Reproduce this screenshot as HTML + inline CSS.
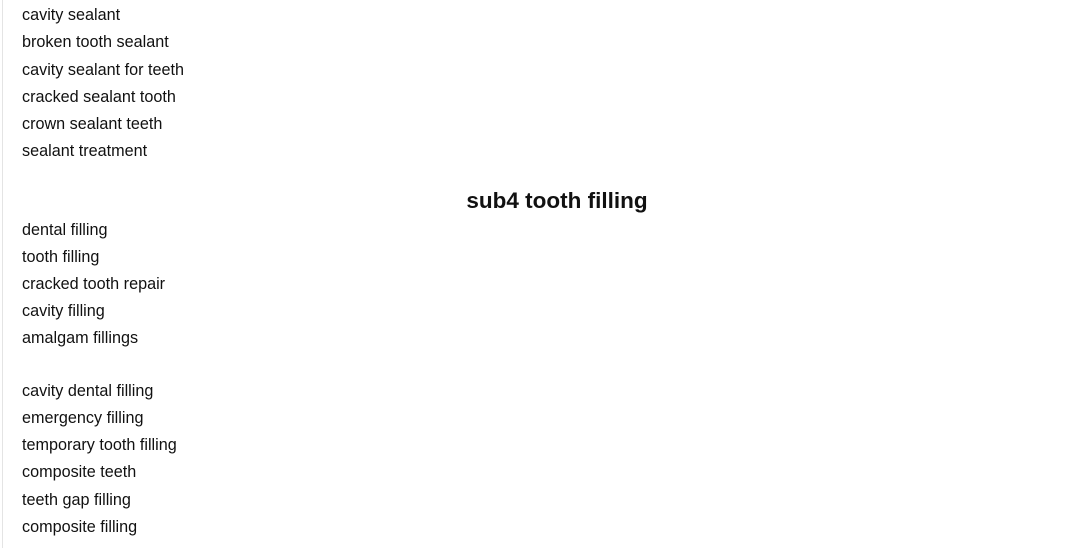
<!DOCTYPE html>
<html><head><style>
body{margin:0;width:1088px;height:548px;background:#fff;position:relative;overflow:hidden;font-family:"Liberation Sans",Arial,sans-serif;color:#111;}
.b{position:absolute;left:2px;top:0;width:1px;height:548px;background:#e4e4e4;}
.t{position:absolute;left:22px;font-size:16.2px;line-height:18px;white-space:nowrap;}
h2{position:absolute;left:0;width:1114px;top:187px;margin:0;text-align:center;font-size:22.5px;line-height:28px;font-weight:bold;color:#111;}
</style></head><body>
<div class="b"></div>
<div class="t" style="top:6px">cavity sealant</div>
<div class="t" style="top:33px">broken tooth sealant</div>
<div class="t" style="top:61px">cavity sealant for teeth</div>
<div class="t" style="top:88px">cracked sealant tooth</div>
<div class="t" style="top:115px">crown sealant teeth</div>
<div class="t" style="top:142px">sealant treatment</div>
<h2>sub4 tooth filling</h2>
<div class="t" style="top:221px">dental filling</div>
<div class="t" style="top:248px">tooth filling</div>
<div class="t" style="top:275px">cracked tooth repair</div>
<div class="t" style="top:302px">cavity filling</div>
<div class="t" style="top:329px">amalgam fillings</div>
<div class="t" style="top:382px">cavity dental filling</div>
<div class="t" style="top:409px">emergency filling</div>
<div class="t" style="top:436px">temporary tooth filling</div>
<div class="t" style="top:463px">composite teeth</div>
<div class="t" style="top:491px">teeth gap filling</div>
<div class="t" style="top:518px">composite filling</div>
</body></html>
